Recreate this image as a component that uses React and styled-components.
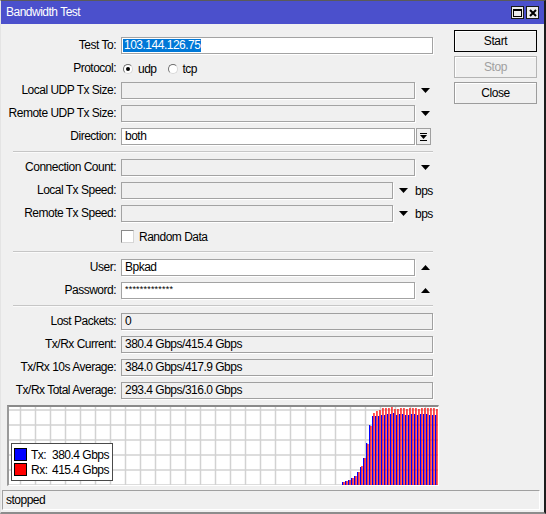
import React from 'react'
import styled, { createGlobalStyle } from 'styled-components'

const FONT = '"Liberation Sans", Arial, sans-serif'

const GlobalStyle = createGlobalStyle`
  html, body {
    margin: 0;
    padding: 0;
    background: #f0f0f0;
  }
  body {
    font-family: ${FONT};
    font-size: 12px;
    letter-spacing: -0.5px;
    color: #000;
  }
`

// bar heights for the tx/rx history (blue, red)
const BARS = [
  [3, 3], [4, 4], [5, 5], [7, 7], [9, 9], [13, 13], [18, 19], [27, 27],
  [42, 41], [60, 59], [69, 72], [69, 74], [69, 75], [70, 77], [70, 77], [71, 77],
  [71, 78], [72, 76], [70, 76], [71, 77], [71, 77], [70, 76], [70, 77], [71, 77],
  [71, 77], [70, 76], [71, 77], [71, 77], [71, 77], [70, 77], [70, 77], [70, 76],
]

const DownArrow = () => (
  <ArrowIcon width="9" height="5" viewBox="0 0 9 5">
    <path d="M0 0H9L4.5 5Z" fill="#000" />
  </ArrowIcon>
)

const UpArrow = () => (
  <ArrowIcon width="9" height="5" viewBox="0 0 9 5">
    <path d="M0 5H9L4.5 0Z" fill="#000" />
  </ArrowIcon>
)

const Row = ({ label, children }) => (
  <FormRow>
    <Label>{label}</Label>
    <FieldArea>{children}</FieldArea>
  </FormRow>
)

const Chart = () => {
  const vLines = []
  for (let x = 11.5; x < 430; x += 15) vLines.push(x)
  const hLines = [3, 18, 33, 48, 63, 78]
  return (
    <svg width="429" height="78" viewBox="0 0 429 78" style={{ display: 'block' }}>
      {vLines.map((x) => (
        <line key={'v' + x} x1={x} y1="0" x2={x} y2="78" stroke="#d2d2d2" strokeWidth="1.5" />
      ))}
      {hLines.map((y) => (
        <line key={'h' + y} x1="0" y1={y} x2="429" y2={y} stroke="#d2d2d2" strokeWidth="1.5" />
      ))}
      {BARS.map(([tx, rx], i) => {
        const x = 333 + i * 3
        return (
          <g key={i}>
            <rect x={x} y={78 - tx} width="1.3" height={tx} fill="#0000ff" />
            <rect x={x + 1.3} y={78 - rx} width="1.3" height={rx} fill="#ff0000" />
          </g>
        )
      })}
    </svg>
  )
}

export default function App() {
  return (
    <>
      <GlobalStyle />
      <Window>
        <TitleBar>
          <Title>Bandwidth Test</Title>
          <TitleButtons>
            <TitleButton>
              <svg width="9" height="8" viewBox="0 0 9 8">
                <rect x="0.5" y="0.5" width="8" height="7" fill="none" stroke="#000" />
                <rect x="0" y="0" width="9" height="2" fill="#000" />
              </svg>
            </TitleButton>
            <TitleButton>
              <svg width="8" height="8" viewBox="0 0 8 8">
                <path d="M1 1L7 7M7 1L1 7" stroke="#000" strokeWidth="2" />
              </svg>
            </TitleButton>
          </TitleButtons>
        </TitleBar>

        <Body>
          <Form>
            <Row label="Test To:">
              <Field $w={312}>
                <Selected>103.144.126.75</Selected>
              </Field>
            </Row>
            <ProtocolRow>
              <Label>Protocol:</Label>
              <FieldArea>
                <Radio $checked />
                <OptionText>udp</OptionText>
                <Radio />
                <OptionText>tcp</OptionText>
              </FieldArea>
            </ProtocolRow>
            <Row label="Local UDP Tx Size:">
              <Field $w={294} $disabled />
              <DownArrow />
            </Row>
            <Row label="Remote UDP Tx Size:">
              <Field $w={294} $disabled />
              <DownArrow />
            </Row>
            <Row label="Direction:">
              <Field $w={294}>both</Field>
              <DropButton>
                <svg width="7" height="8" viewBox="0 0 7 8">
                  <rect x="0" y="0" width="7" height="1" fill="#000" />
                  <path d="M0 2H7L3.5 6Z" fill="#000" />
                  <rect x="0" y="7" width="7" height="1" fill="#000" />
                </svg>
              </DropButton>
            </Row>

            <Separator />

            <Row label="Connection Count:">
              <Field $w={294} $disabled />
              <DownArrow />
            </Row>
            <Row label="Local Tx Speed:">
              <Field $w={272} $disabled />
              <DownArrow />
              <Unit>bps</Unit>
            </Row>
            <Row label="Remote Tx Speed:">
              <Field $w={272} $disabled />
              <DownArrow />
              <Unit>bps</Unit>
            </Row>
            <Row label="">
              <Checkbox />
              <OptionText>Random Data</OptionText>
            </Row>

            <Separator />

            <Row label="User:">
              <Field $w={294}>Bpkad</Field>
              <UpArrow />
            </Row>
            <Row label="Password:">
              <Field $w={294}>
                <Secret>*************</Secret>
              </Field>
              <UpArrow />
            </Row>

            <Separator />

            <Row label="Lost Packets:">
              <ReadOnly>0</ReadOnly>
            </Row>
            <Row label="Tx/Rx Current:">
              <ReadOnly>380.4 Gbps/415.4 Gbps</ReadOnly>
            </Row>
            <Row label="Tx/Rx 10s Average:">
              <ReadOnly>384.0 Gbps/417.9 Gbps</ReadOnly>
            </Row>
            <Row label="Tx/Rx Total Average:">
              <ReadOnly>293.4 Gbps/316.0 Gbps</ReadOnly>
            </Row>

            <Graph>
              <Chart />
              <Legend>
                <LegendRow>
                  <Swatch $color="#0000ff" />
                  <LegendKey>Tx:</LegendKey>
                  <span>380.4 Gbps</span>
                </LegendRow>
                <LegendRow>
                  <Swatch $color="#ff0000" />
                  <LegendKey>Rx:</LegendKey>
                  <span>415.4 Gbps</span>
                </LegendRow>
              </Legend>
            </Graph>
          </Form>

          <Side>
            <Button $primary>Start</Button>
            <Button disabled>Stop</Button>
            <Button>Close</Button>
          </Side>
        </Body>

        <StatusBar>stopped</StatusBar>
      </Window>
    </>
  )
}

const Window = styled.div`
  width: 546px;
  height: 514px;
  box-sizing: border-box;
  display: flex;
  flex-direction: column;
  background: #f0f0f0;
  border-top: 1px solid #5a5a5a;
  border-left: 1px solid #e4e4e4;
  border-right: 2px solid #1c1c1c;
  border-bottom: 2px solid #8c8c8c;
`
const TitleBar = styled.div`
  height: 23px;
  flex: none;
  display: flex;
  align-items: center;
  justify-content: space-between;
  padding: 0 5px 0 5px;
  background: #4b50cc;
  color: #fff;
`
const Title = styled.div`
  font-size: 12px;
  letter-spacing: -0.5px;
  line-height: 23px;
`
const TitleButtons = styled.div`
  display: flex;
  gap: 2px;
`
const TitleButton = styled.div`
  width: 13px;
  height: 13px;
  box-sizing: border-box;
  border: 1px solid #1a1a1a;
  background: #ececec;
  display: flex;
  align-items: center;
  justify-content: center;
`
const Body = styled.div`
  display: flex;
  align-items: flex-start;
`
const Form = styled.div`
  width: 438px;
  flex: none;
  padding-top: 13px;
  display: flex;
  flex-direction: column;
  gap: 6px;
`
const FormRow = styled.div`
  display: grid;
  grid-template-columns: 115px 1fr;
  column-gap: 5px;
  height: 17px;
  align-items: center;
  margin-right: 6px;
`
const ProtocolRow = styled(FormRow)`
  height: 16px;
`
const Label = styled.div`
  text-align: right;
  white-space: nowrap;
  line-height: 17px;
`
const FieldArea = styled.div`
  display: flex;
  align-items: center;
  height: 17px;
  white-space: nowrap;
`
const Field = styled.div`
  flex: none;
  width: ${(p) => p.$w}px;
  height: 17px;
  box-sizing: border-box;
  border: 1px solid #a3a3a3;
  background: ${(p) => (p.$disabled ? '#f0f0f0' : '#fff')};
  box-shadow: 1px 1px 0 #fff;
  padding-left: 3px;
  line-height: 15px;
  white-space: nowrap;
  overflow: hidden;
`
const ReadOnly = styled(Field).attrs({ $w: 312, $disabled: true })`
  border-color: #a0a0a0;
`
const Selected = styled.span`
  display: inline-block;
  background: #0078d7;
  color: #fff;
  margin-left: -2px;
  padding: 0 1px;
  line-height: 13px;
  margin-top: 1px;
`
const Secret = styled.span`
  font-size: 9px;
  letter-spacing: 0.2px;
  line-height: 12px;
  display: inline-block;
  vertical-align: top;
`
const ArrowIcon = styled.svg`
  flex: none;
  margin-left: 6px;
  display: block;
`
const Unit = styled.span`
  margin-left: 7px;
`
const DropButton = styled.div`
  flex: none;
  width: 15px;
  height: 17px;
  margin-left: 1px;
  box-sizing: border-box;
  border: 1px solid #a0a0a0;
  background: #f0f0f0;
  display: flex;
  align-items: center;
  justify-content: center;
`
const Radio = styled.span`
  flex: none;
  width: 10px;
  height: 10px;
  box-sizing: border-box;
  border-radius: 50%;
  border: 1px solid;
  border-color: #6e6e6e #d8d8d8 #d8d8d8 #6e6e6e;
  background: #fff;
  margin-left: 2px;
  display: flex;
  align-items: center;
  justify-content: center;

  &::after {
    content: '';
    width: 4px;
    height: 4px;
    border-radius: 50%;
    background: ${(p) => (p.$checked ? '#000' : 'transparent')};
  }
`
const OptionText = styled.span`
  margin: 0 9px 0 5px;
`
const Checkbox = styled.span`
  flex: none;
  width: 13px;
  height: 13px;
  box-sizing: border-box;
  border: 1px solid;
  border-color: #8a8a8a #d6d6d6 #d6d6d6 #8a8a8a;
  background: #fff;
`
const Separator = styled.div`
  height: 2px;
  box-sizing: border-box;
  margin: 0 6px 0 12px;
  border-top: 1px solid #c6c6c6;
  border-bottom: 1px solid #fafafa;
`
const Graph = styled.div`
  position: relative;
  margin-left: 6px;
  width: 432px;
  height: 81px;
  box-sizing: border-box;
  border-top: 2px solid #8a8a8a;
  border-left: 2px solid #9a9a9a;
  border-bottom: 1px solid #fff;
  border-right: 1px solid #fff;
  background: #fff;
`
const Legend = styled.div`
  position: absolute;
  left: 2px;
  top: 36px;
  width: 102px;
  box-sizing: border-box;
  padding: 3px 2px;
  border: 1px solid #4a4a4a;
  background: #fff;
  display: flex;
  flex-direction: column;
`
const LegendRow = styled.div`
  display: flex;
  align-items: center;
  height: 15px;
  white-space: nowrap;
`
const Swatch = styled.span`
  flex: none;
  width: 13px;
  height: 13px;
  box-sizing: border-box;
  border: 1px solid #000;
  background: ${(p) => p.$color};
  margin-right: 4px;
`
const LegendKey = styled.span`
  flex: none;
  width: 21px;
`
const Side = styled.div`
  margin-left: 15px;
  padding-top: 6px;
  display: flex;
  flex-direction: column;
  gap: 4px;
`
const Button = styled.button`
  width: 83px;
  height: 22px;
  padding: 0;
  font-family: ${FONT};
  font-size: 12px;
  letter-spacing: -0.4px;
  color: #000;
  background: #f0f0f0;
  border: 1px solid ${(p) => (p.$primary ? '#000' : '#9c9c9c')};
  box-shadow: inset 1px 1px 0 #fff;

  &:disabled {
    color: #a0a0a0;
    border-color: #b4b4b4;
  }
`
const StatusBar = styled.div`
  height: 20px;
  margin: 4px 4px 0 1px;
  box-sizing: border-box;
  border-top: 1px solid #a0a0a0;
  border-left: 1px solid #a0a0a0;
  border-bottom: 1px solid #fff;
  border-right: 1px solid #fff;
  padding-left: 3px;
  line-height: 18px;
`
